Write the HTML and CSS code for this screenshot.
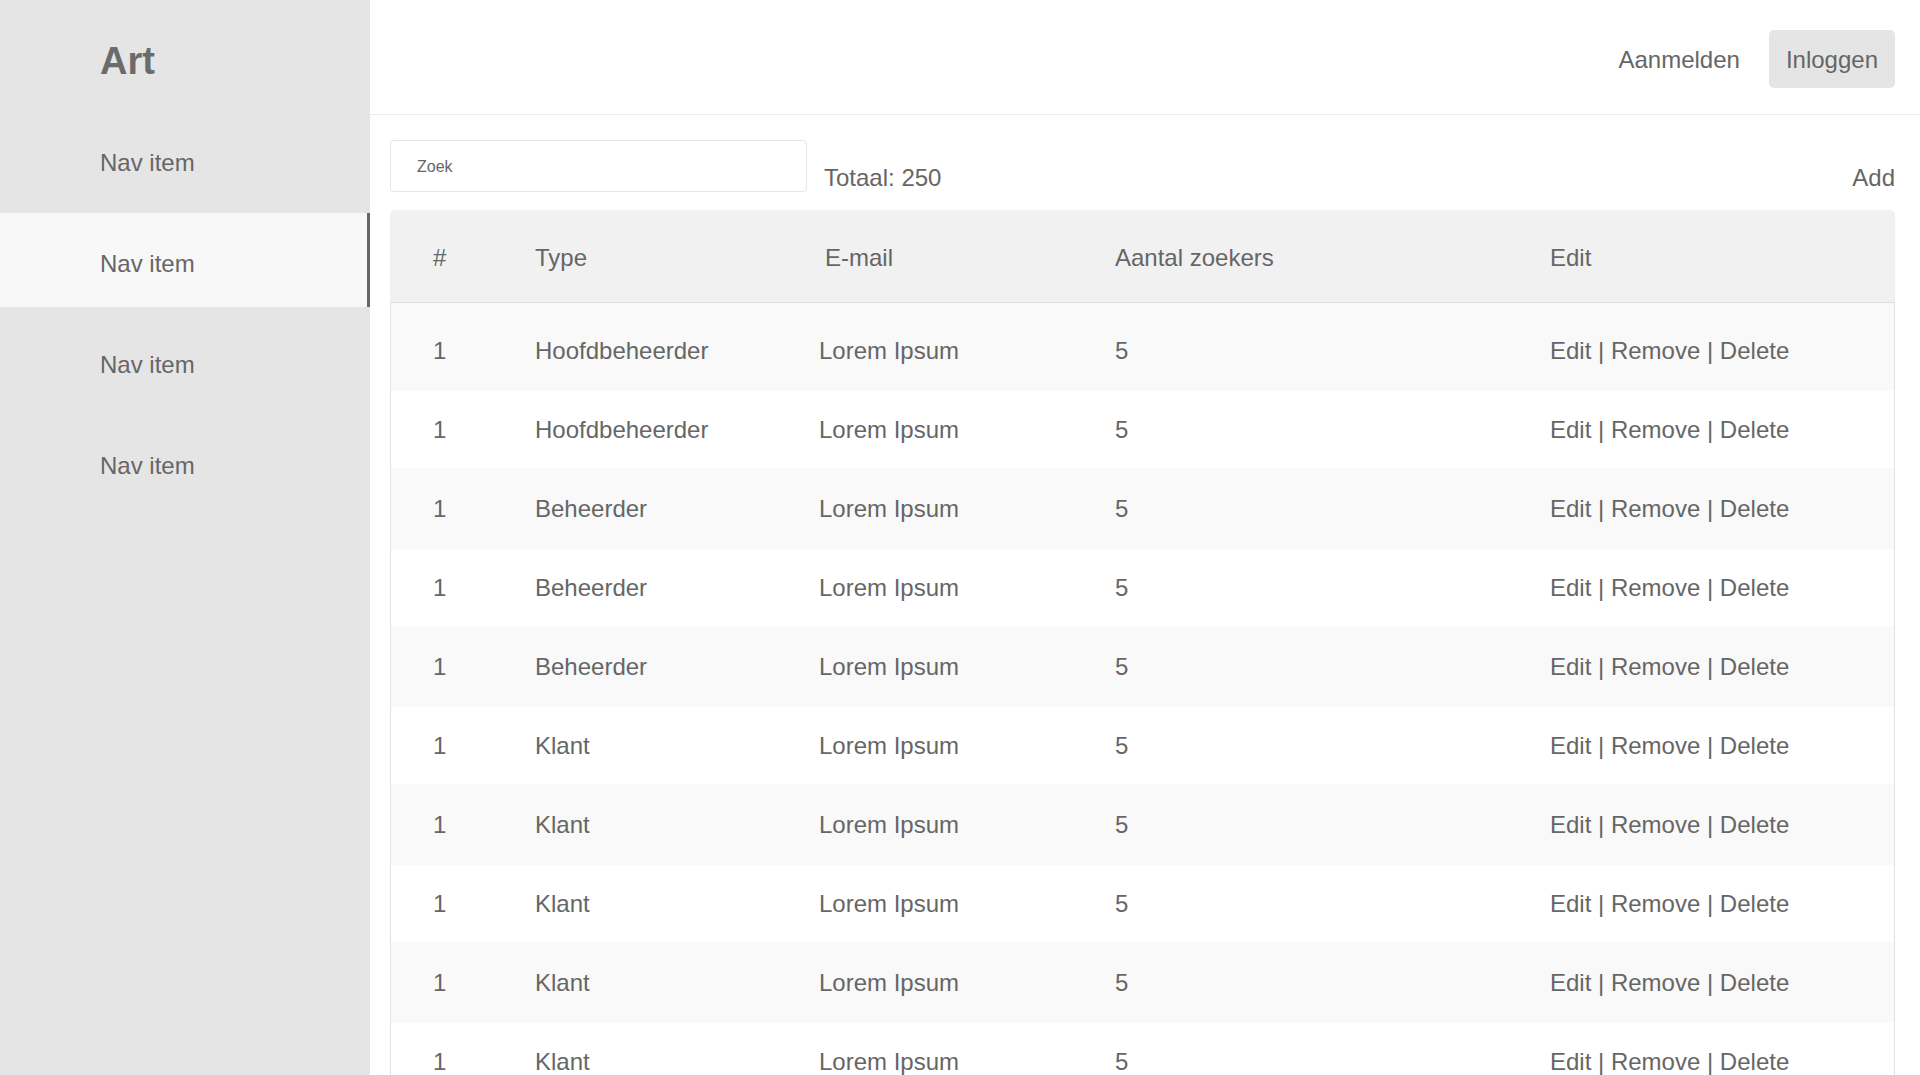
FILE: index.html
```html
<!DOCTYPE html>
<html lang="nl">
<head>
<meta charset="utf-8">
<title>Art</title>
<link rel="stylesheet" href="styles.css">
</head>
<body>
<div class="app">
  <aside class="sidebar">
    <div class="logo">Art</div>
    <nav class="nav">
      <a class="nav-item" href="#">Nav item</a>
      <a class="nav-item active" href="#">Nav item</a>
      <a class="nav-item" href="#">Nav item</a>
      <a class="nav-item" href="#">Nav item</a>
    </nav>
  </aside>
  <div class="main">
    <header class="topbar">
      <a class="link" href="#">Aanmelden</a>
      <a class="btn" href="#">Inloggen</a>
    </header>
    <section class="content">
      <div class="toolbar">
        <div class="search">Zoek</div>
        <div class="total">Totaal: 250</div>
        <a class="add" href="#">Add</a>
      </div>
      <table class="grid">
        <colgroup>
          <col class="c1"><col class="c2"><col class="c3"><col class="c4"><col class="c5">
        </colgroup>
        <thead>
          <tr><th>#</th><th>Type</th><th class="th-mail">E-mail</th><th>Aantal zoekers</th><th>Edit</th></tr>
        </thead>
        <tbody>
          <tr><td>1</td><td>Hoofdbeheerder</td><td>Lorem Ipsum</td><td>5</td><td>Edit | Remove | Delete</td></tr>
          <tr><td>1</td><td>Hoofdbeheerder</td><td>Lorem Ipsum</td><td>5</td><td>Edit | Remove | Delete</td></tr>
          <tr><td>1</td><td>Beheerder</td><td>Lorem Ipsum</td><td>5</td><td>Edit | Remove | Delete</td></tr>
          <tr><td>1</td><td>Beheerder</td><td>Lorem Ipsum</td><td>5</td><td>Edit | Remove | Delete</td></tr>
          <tr><td>1</td><td>Beheerder</td><td>Lorem Ipsum</td><td>5</td><td>Edit | Remove | Delete</td></tr>
          <tr><td>1</td><td>Klant</td><td>Lorem Ipsum</td><td>5</td><td>Edit | Remove | Delete</td></tr>
          <tr><td>1</td><td>Klant</td><td>Lorem Ipsum</td><td>5</td><td>Edit | Remove | Delete</td></tr>
          <tr><td>1</td><td>Klant</td><td>Lorem Ipsum</td><td>5</td><td>Edit | Remove | Delete</td></tr>
          <tr><td>1</td><td>Klant</td><td>Lorem Ipsum</td><td>5</td><td>Edit | Remove | Delete</td></tr>
          <tr><td>1</td><td>Klant</td><td>Lorem Ipsum</td><td>5</td><td>Edit | Remove | Delete</td></tr>
        </tbody>
      </table>
    </section>
  </div>
</div>
</body>
</html>
```

FILE: styles.css
```css
* { box-sizing: border-box; }
html, body { margin: 0; padding: 0; height: 100%; }
body {
  font-family: "Liberation Sans", Arial, Helvetica, sans-serif;
  color: #666;
  background: #fff;
  overflow: hidden;
}
a { color: inherit; text-decoration: none; }

.app {
  display: flex;
  height: 100vh;
}

/* Sidebar */
.sidebar {
  width: 370px;
  flex: 0 0 370px;
  background: #e5e5e5;
  padding-top: 39px;
}
.logo {
  padding-left: 100px;
  font-size: 38px;
  line-height: 44px;
  font-weight: 700;
  color: #6b6b6b;
  margin-bottom: 29px;
}
.nav {
  display: flex;
  flex-direction: column;
  gap: 7px;
}
.nav-item {
  display: block;
  padding: 37px 0 29px 100px;
  font-size: 24px;
  line-height: 28px;
  color: #666;
}
.nav-item.active {
  background: #f8f8f8;
  border-right: 3px solid #666;
}

/* Main */
.main {
  flex: 1;
  min-width: 0;
  overflow: hidden;
}
.topbar {
  display: flex;
  justify-content: flex-end;
  align-items: center;
  gap: 29px;
  padding: 30px 25px 26px 0;
  border-bottom: 1px solid #ececec;
  height: 115px;
}
.link {
  font-size: 24px;
  line-height: 28px;
  padding-top: 1px;
}
.btn {
  display: block;
  font-size: 24px;
  line-height: 28px;
  padding: 16px 17px 14px;
  height: 58px;
  background: #e5e5e5;
  border-radius: 5px;
}

.content {
  padding: 25px 25px 0 20px;
}
.toolbar {
  display: flex;
  align-items: flex-end;
  margin-bottom: 18px;
}
.search {
  width: 417px;
  height: 52px;
  border: 1px solid #e6e6e6;
  border-radius: 4px;
  padding: 1px 0 0 26px;
  font-size: 16px;
  line-height: 49px;
  color: #666;
}
.total {
  margin-left: 17px;
  font-size: 24px;
  line-height: 28px;
}
.add {
  margin-left: auto;
  font-size: 24px;
  line-height: 28px;
}

/* Table */
.grid {
  width: 1505px;
  table-layout: fixed;
  border-collapse: separate;
  border-spacing: 0;
  font-size: 24px;
  line-height: 28px;
}
.c1 { width: 145px; }
.c2 { width: 284px; }
.c3 { width: 296px; }
.c4 { width: 435px; }
.c5 { width: 345px; }

.grid th {
  text-align: left;
  font-weight: 400;
  background: #f1f1f1;
  padding: 34px 0 30px;
  border-bottom: 1px solid #dedede;
  white-space: nowrap;
}
.grid th:first-child { padding-left: 43px; border-top-left-radius: 5px; }
.grid th:last-child { border-top-right-radius: 5px; }
.grid th.th-mail { padding-left: 6px; }

.grid td {
  padding: 25px 0 24px 0;
  white-space: nowrap;
  vertical-align: top;
}
.grid tbody tr:nth-child(odd) td {
  background: #f9f9f9;
  padding-top: 27px;
  padding-bottom: 26px;
}
.grid tbody tr:first-child td {
  padding-top: 34px;
}
.grid td:first-child {
  padding-left: 42px;
  border-left: 1px solid #e2e2e2;
}
.grid td:last-child {
  border-right: 1px solid #e2e2e2;
}
```
